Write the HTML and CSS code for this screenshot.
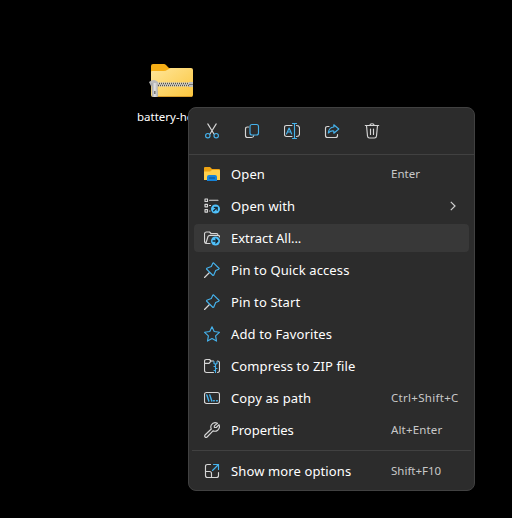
FILE: index.html
```
<!DOCTYPE html>
<html lang="en">
<head>
<meta charset="utf-8">
<title>Desktop</title>
<link rel="stylesheet" href="styles.css">
</head>
<body>
<div class="file">
  <svg width="46" height="36" viewBox="0 0 46 36">
    <defs>
      <linearGradient id="body" x1="0" y1="0" x2="1" y2="1"><stop offset="0" stop-color="#ffe69a"/><stop offset="1" stop-color="#fbc63e"/></linearGradient>
      <linearGradient id="metal" x1="0" y1="0" x2="1" y2="0"><stop offset="0" stop-color="#999"/><stop offset=".5" stop-color="#e4e4e4"/><stop offset="1" stop-color="#aaa"/></linearGradient>
    </defs>
    <path d="M2 3q0-2 2-2h11q1 0 2 1l3 3h22v10H2z" fill="#f5ae16"/>
    <path d="M2 9q0-1 1-1h12q2 0 3-1l2-1q1-1 2-1h20q2 0 2 2v25q0 2-2 2H4q-2 0-2-2z" fill="url(#body)"/>
    <path d="M3 33.500h40" stroke="#d99d2b"/>
    <path d="M7 19.500h34v4H7z" fill="#d8d4c8"/>
    <path d="M8 20.500h32" stroke="#55524a" stroke-width="1.400" stroke-dasharray="1 1"/><path d="M9 22.500h31" stroke="#55524a" stroke-width="1.400" stroke-dasharray="1 1"/>
    <path d="M0 19q5-4 9 0v4H2z" fill="#bbb"/>
    <path d="M2.500 20h6l.5 13q0 1-1 1H4q-1 0-1-1z" fill="url(#metal)"/>
    <path d="M5.800 28v3" stroke="#777" stroke-width="1.500"/>
    <path d="M40 19h4v5h-4z" fill="#bcbcbc"/><path d="M40 21.500h4" stroke="#777"/>
  </svg>
  <span class="file-name">battery-health</span>
</div>

<div class="menu">
  <div class="toolbar">
    <svg class="icon" viewBox="0 0 16 16"><path d="M3.800.9 10 11M12.200.9 6 11"/><g class="blue"><circle cx="3.800" cy="12.700" r="2.200"/><circle cx="12.200" cy="12.700" r="2.200"/></g></svg>
    <svg class="icon" viewBox="0 0 16 16"><path d="M4.500 4H3.500Q1.500 4 1.500 6v6.500q0 2 2 2H7.500q2 0 2.300-2"/><rect class="blue" x="6" y="1.500" width="8.500" height="10.500" rx="2"/></svg>
    <svg class="icon" viewBox="0 0 16 16"><path d="M8 2.500H2.500q-2 0-2 2v7q0 2 2 2H8M12.500 2.500q3 0 3 2.500v6q0 2.500-3 2.500"/><g class="blue"><path d="m2.500 11 2.600-6 2.600 6M3.500 9h3.300M10.500.5v15M8.500.5h4M8.500 15.500h4"/></g></svg>
    <svg class="icon" viewBox="0 0 16 16"><path d="M5 3.500H3.500q-2 0-2 2v7q0 2 2 2h8q2 0 2-2V11.500"/><path class="blue" d="M9.800 1.800 14.800 6 9.800 10.200V8Q6.500 7.500 4.300 10 4.700 4.500 9.800 4z"/></svg>
    <svg class="icon" viewBox="0 0 16 16"><path d="M1.300 2.500h13.400M6 2.500Q6 .7 8 .7t2 1.800M2.500 2.500l1 10.500q.2 2 2 2h5q1.800 0 2-2l1-10.500M6.500 6v5.500M9.500 6v5.500"/></svg>
  </div>

  <div class="items">
    <div class="item">
      <svg class="icon" viewBox="0 0 16 16"><path class="solid" fill="#eda313" d="M0 2q0-1 1-1h5l2 2h7q1 0 1 1v4H0z"/><path class="solid" fill="#ffd04c" d="M0 5.500h6L8 4h7q1 0 1 1v9H0z"/><path class="solid" fill="#1683d8" d="M3 15v-4q0-2 2-2h6q2 0 2 2v4z"/><path stroke="#0b4c8c" d="M5.500 12h5"/></svg>
      <span class="label">Open</span><span class="key">Enter</span>
    </div>
    <div class="item">
      <svg class="icon" viewBox="0 0 16 16"><rect x="1" y="1" width="2.500" height="2.500"/><rect x="1" y="6.300" width="2.500" height="2.500"/><rect x="1" y="11.600" width="2.500" height="2.500"/><path d="M5.500 2.200H14M5.500 7.500H6.500M5.500 13H6"/><circle class="badge" cx="11.500" cy="11" r="4.500"/><path class="arrow" d="m9.700 12.800 3.400-3.400M10.300 9.300h2.900v2.900"/></svg>
      <span class="label">Open with</span>
      <svg class="chevron" viewBox="0 0 6 10"><path d="m.8.8 4.200 4.200L.8 9.200"/></svg>
    </div>
    <div class="item active">
      <svg class="icon" viewBox="0 0 16 16"><path d="M6 13.500H3Q.5 13.500.5 11V4Q.5 2 2.500 2h3L7 3.500h5.500q1.500 0 1.500 1.700M2 13l2-6.500Q4.500 5.300 6 5.300h8q1.500 0 1.500 1.500"/><circle class="badge" cx="11.500" cy="11" r="4.500"/><path class="arrow" d="M9 11h4.700M11.800 9l2 2-2 2"/></svg>
      <span class="label tight">Extract All...</span>
    </div>
    <div class="item">
      <svg class="icon" viewBox="0 0 16 16"><path d="m.5 15.500 5-5"/><path class="blue" d="M9.500.8 15.200 6.500 14.700 7.200 11.700 8.600 9.700 13.300 9 13.500 2.500 7 2.800 6.300 7.300 4.500 8.800 1.300z"/></svg>
      <span class="label">Pin to Quick access</span>
    </div>
    <div class="item">
      <svg class="icon" viewBox="0 0 16 16"><path d="m.5 15.500 5-5"/><path class="blue" d="M9.500.8 15.200 6.500 14.700 7.200 11.700 8.600 9.700 13.300 9 13.500 2.500 7 2.800 6.300 7.300 4.500 8.800 1.300z"/></svg>
      <span class="label">Pin to Start</span>
    </div>
    <div class="item">
      <svg class="icon" viewBox="0 0 16 16"><path class="blue" d="m8 .8 2.200 4.700 5.200.8-3.800 3.600.9 5.200L8 12.600l-4.500 2.500.9-5.200L.6 6.300l5.200-.8z"/></svg>
      <span class="label">Add to Favorites</span>
    </div>
    <div class="item">
      <svg class="icon" viewBox="0 0 16 16"><path d="M9.500 3H7L5.500 1.500h-3q-2 0-2 2v9q0 2 2 2h7M13.500 14.500q2 0 2-2V5q0-2-2-2M.5 5.300H5L7 3"/><path class="blue" d="M10 3.500v2q1.500 1 3 0v-2M11.500 6v8.500M10 8.500h1.500M11.500 10.500H13M10 12.500h1.500"/></svg>
      <span class="label">Compress to ZIP file</span>
    </div>
    <div class="item">
      <svg class="icon" viewBox="0 0 16 16"><rect x=".5" y="2.500" width="15" height="11" rx="2"/><path class="blue bold" d="m2.800 5 2 6M5.800 5l2 6M9.500 10.800h.8M12.500 10.800h.8"/></svg>
      <span class="label">Copy as path</span><span class="key ctrl">Ctrl+Shift+C</span>
    </div>
    <div class="item">
      <svg class="icon" viewBox="0 0 16 16"><path d="M13.500 1.300Q9.500-.5 7.300 3q-1 2 0 4L1 13q-.8 1.200.1 2t2 0L9 8.900q2.500 1 4.700-.7Q16.400 6 15 2.700l-2.700 2.800-1.900-.1-.1-1.500z"/></svg>
      <span class="label tight">Properties</span><span class="key alt">Alt+Enter</span>
    </div>
  </div>

  <div class="more">
    <div class="item">
      <svg class="icon" viewBox="0 0 16 16"><path d="M6.500 1.500H3.500q-2 0-2 2v9q0 2 2 2h9q2 0 2-2V9.500M1.500 8.500h4q2 0 2 2v4"/><path class="blue" d="m8.500 7.500 6-6M9.500 1.500h5v5"/></svg>
      <span class="label">Show more options</span><span class="key">Shift+F10</span>
    </div>
  </div>
</div>
</body>
</html>
```
FILE: styles.css
```
* { box-sizing: border-box; }
body {
  margin: 0;
  width: 512px;
  height: 518px;
  overflow: hidden;
  background: #000;
  font-family: "Noto Sans", "Open Sans", sans-serif;
  color: #fff;
}
.file {
  position: absolute;
  left: 137px;
  top: 63px;
  width: 100px;
}
.file svg { display: block; margin-left: 12px; }
.file-name {
  display: block;
  margin-top: 10px;
  font-size: 11.5px;
  line-height: 16px;
  white-space: nowrap;
}
.menu {
  position: absolute;
  left: 188px;
  top: 107px;
  width: 287px;
  height: 384px;
  border: 1px solid #414141;
  border-radius: 8px;
  background: #2c2c2c;
}
.toolbar {
  display: flex;
  align-items: center;
  gap: 24px;
  height: 47px;
  padding-left: 15px;
  border-bottom: 1px solid #414141;
}
.items {
  display: flex;
  flex-direction: column;
  gap: 4px;
  padding: 5px 5px 6px;
}
.more {
  margin: 0 3px;
  padding: 6px 2px 0;
  border-top: 1px solid #414141;
}
.item {
  display: grid;
  grid-template-columns: 16px 152px 1fr;
  column-gap: 11px;
  align-items: center;
  height: 28px;
  padding-left: 10px;
  border-radius: 4px;
}
.label, .key { white-space: nowrap; line-height: 20px; }
.label { font-size: 13px; letter-spacing: 0.12px; }
.tight { letter-spacing: -0.05px; }
.key {
  margin-left: -3px;
  font-size: 11.5px;
  color: #c8c8c8;
}
.ctrl { letter-spacing: 0.3px; }
.alt { letter-spacing: 0.15px; }
.active { background: #383838; }
.icon {
  width: 16px;
  height: 16px;
  fill: none;
  stroke: #d6d6d6;
  stroke-width: 1.15;
  stroke-linecap: round;
  stroke-linejoin: round;
}
.blue { stroke: #45b2ec; }
.bold { stroke-width: 1.4; }
.solid { stroke: none; }
.badge { fill: #4fc0fa; stroke: none; }
.arrow { stroke: #17262f; stroke-width: 1.3; }
.chevron {
  width: 6px;
  height: 10px;
  margin-left: 56px;
  fill: none;
  stroke: #d0d0d0;
  stroke-width: 1.2;
}
```
